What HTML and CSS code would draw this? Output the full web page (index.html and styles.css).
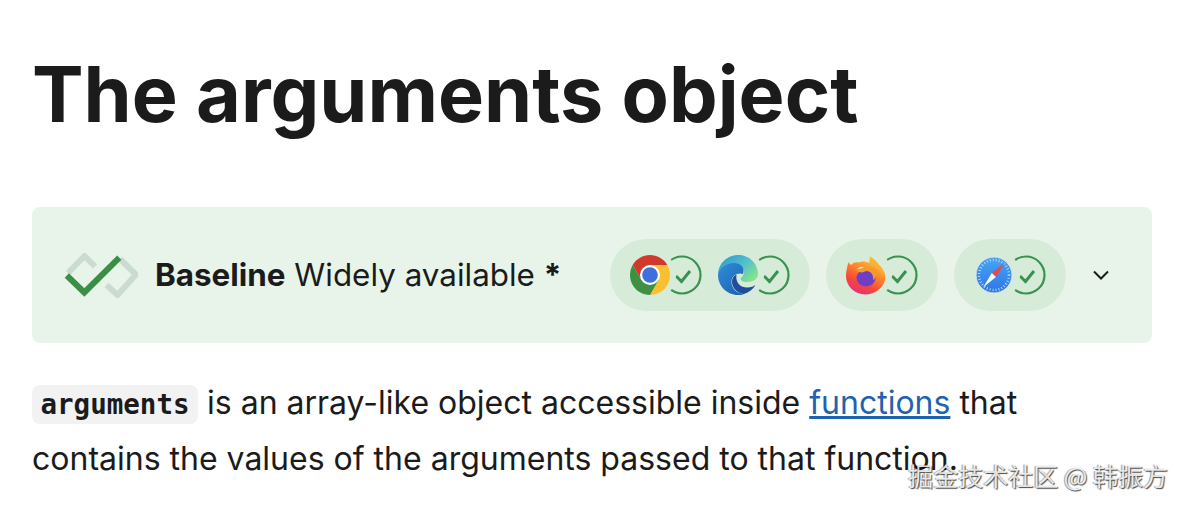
FILE: index.html
```html
<!DOCTYPE html>
<html lang="en">
<head>
<meta charset="utf-8">
<title>The arguments object</title>
<link rel="stylesheet" href="styles.css">
</head>
<body>
<main class="page">
  <h1 class="title">The arguments object</h1>
  <section class="baseline">
    <svg class="logo" viewBox="0 0 74 45" aria-hidden="true">
      <path class="logo-back" d="M4 20 20.500 3 31 13.500M42.500 32 53.500 42 72 21.500 56 6"/>
      <path class="logo-check" d="M2.800 22.500 20.300 39.500 55.300 4.700"/>
    </svg>
    <div class="label"><strong>Baseline</strong> Widely available <strong>*</strong></div>
    <div class="browsers">
      <div class="pill">
        <div class="browser">
          <svg class="ring" viewBox="0 0 40 40"><circle cx="20" cy="20" r="18.500"/><path d="M14 21 19.500 26.500 28 16"/></svg>
          <svg class="icon" viewBox="0 0 40 40">
            <circle class="cut" cx="20" cy="20" r="26"/>
            <path fill="#d0392b" d="M2.680 10A20 20 0 0 1 37.320 10H20L11.340 25Z"/>
            <path fill="#fbc02d" d="M37.320 10A20 20 0 0 1 20 40L28.660 25 20 10Z"/>
            <path fill="#3f9142" d="M20 40A20 20 0 0 1 2.680 10L11.340 25 28.660 25Z"/>
            <circle cx="20" cy="20" r="10" fill="#fff"/>
            <circle cx="20" cy="20" r="7.800" fill="#3f6fdc"/>
          </svg>
        </div>
        <div class="browser">
          <svg class="ring" viewBox="0 0 40 40"><circle cx="20" cy="20" r="18.500"/><path d="M14 21 19.500 26.500 28 16"/></svg>
          <svg class="icon" viewBox="0 0 40 40">
            <defs>
              <linearGradient id="edgeTop" x1="0" y1="0" x2="1" y2="0.700"><stop offset="0" stop-color="#2f95c6"/><stop offset="0.550" stop-color="#4dbcd4"/><stop offset="1" stop-color="#84e38a"/></linearGradient>
              <linearGradient id="edgeBody" x1="0" y1="0" x2="0.800" y2="1"><stop offset="0" stop-color="#2f8fd8"/><stop offset="1" stop-color="#1f62b4"/></linearGradient>
            </defs>
            <circle class="cut" cx="20" cy="20" r="26"/>
            <path fill="url(#edgeTop)" d="M20 0C31 0 40 8 40 19 40 24 35 27 29 27 24 27 22 25 23 23 25 21 26 19 26 17 26 13 22 9 17 9 9 9 2 14 0 20 0 9 9 0 20 0Z"/>
            <path fill="url(#edgeBody)" d="M0 20C1 13 9 7.500 17 8 24 8.500 27 14 25 19 20 17 14 20 13.500 26 13 33 19 39 26 39 24 40 22 40 20 40 9 40 0 31 0 20Z"/>
            <path fill="#1f4f9c" d="M18.500 19.500C15 21 14 24 14 27 14 33 20 39 26 39 31 37.500 35 34 37.500 30 36 31 33 32.500 29 32.500 23 32.500 17 28 18.500 19.500Z"/>
          </svg>
        </div>
      </div>
      <div class="pill">
        <div class="browser">
          <svg class="ring" viewBox="0 0 40 40"><circle cx="20" cy="20" r="18.500"/><path d="M14 21 19.500 26.500 28 16"/></svg>
          <svg class="icon" viewBox="0 0 40 40">
            <defs>
              <linearGradient id="foxBody" x1="0.800" y1="0" x2="0.300" y2="1"><stop offset="0" stop-color="#ffd646"/><stop offset="0.400" stop-color="#ff8f2a"/><stop offset="0.750" stop-color="#f4473a"/><stop offset="1" stop-color="#e62f80"/></linearGradient>
            </defs>
            <circle class="cut" cx="20" cy="20" r="26"/>
            <path fill="url(#foxBody)" d="M24 0C25 5 29 7 33 10 38 14 40 20 39 25 37 33 29 39.500 19.500 39.500 8.500 39.500 0 31 0 21 0 17 1 12 2.500 7 3.500 8.500 4 9.500 5.500 10 7 7.500 10 7 13 7.500 16 6 20 6.500 23 8 24 5 23.500 2 24 0Z"/>
            <path fill="#f9b233" d="M25 2C31 6 37 13 37 21 35 16 31 11 24 9 25 6 25 4 25 2Z"/>
            <ellipse cx="20" cy="23" rx="9.500" ry="8.500" fill="#6d3ec8"/>
            <path fill="#f39a2c" d="M10 15C14 10 25 10 30 15 31 19 30 23 27 25 28 20 25 16 20 16 17 18 13 18 10 15Z"/>
            <path fill="#fde7c4" d="M11.500 13.500C13 12 16 11.500 18 12 16 13.500 14 14 11.500 13.500Z"/>
          </svg>
        </div>
      </div>
      <div class="pill">
        <div class="browser">
          <svg class="ring" viewBox="0 0 40 40"><circle cx="20" cy="20" r="18.500"/><path d="M14 21 19.500 26.500 28 16"/></svg>
          <svg class="icon" viewBox="0 0 40 40">
            <defs>
              <linearGradient id="safariDial" x1="0" y1="0" x2="0" y2="1"><stop offset="0" stop-color="#45a6f4"/><stop offset="1" stop-color="#2f76e6"/></linearGradient>
            </defs>
            <circle class="cut" cx="20" cy="20" r="26"/>
            <circle cx="20" cy="20" r="18" fill="url(#safariDial)" stroke="#d9e6f2" stroke-width="1"/>
            <circle cx="20" cy="20" r="15" fill="none" stroke="#cfe4fa" stroke-width="2.500" stroke-dasharray="0.800 2.200"/>
            <path fill="#e5484d" d="M31 7.500 22 22 17.800 18Z"/>
            <path fill="#f4f6f8" d="M9 32.500 17.800 18 22 22Z"/>
          </svg>
        </div>
      </div>
    </div>
    <svg class="chevron" viewBox="0 0 18 12" aria-hidden="true"><path d="M2 2.500 9 9.500 16 2.500"/></svg>
  </section>
  <p class="intro"><code class="code">arguments</code> is an array-like object accessible inside <a class="link" href="#">functions</a> that contains the values of the arguments passed to that function.</p>
</main>
<div class="watermark">掘金技术社区 @ 韩振方</div>
</body>
</html>
```

FILE: styles.css
```css
* {
  box-sizing: border-box;
}

html,
body {
  margin: 0;
  height: 100%;
  overflow: hidden;
  background: #fff;
}

body {
  position: relative;
  font-family: Inter, "Liberation Sans", sans-serif;
  color: #1b1b1b;
}

.page {
  padding: 0 32px;
}

.title {
  margin: 0;
  padding-top: 46px;
  height: 207px;
  font-size: 77.300px;
  line-height: 96px;
  font-weight: 700;
}

.baseline {
  display: flex;
  align-items: center;
  height: 136px;
  padding: 32px;
  background: #e8f4ea;
  border-radius: 8px;
}

.logo {
  flex: none;
  width: 74px;
  height: 45px;
  fill: none;
}

.logo-back {
  stroke: #c9dccf;
  stroke-width: 6;
  fill: none;
}

.logo-check {
  stroke: #3a8e45;
  stroke-width: 6;
  fill: none;
}

.label {
  margin-left: 17px;
  font-size: 31.400px;
  line-height: 40px;
  white-space: nowrap;
}

.browsers {
  display: flex;
  gap: 16px;
  margin-left: auto;
}

.pill {
  display: flex;
  gap: 16px;
  height: 72px;
  padding: 16px 20px;
  background: #d7ebd9;
  border-radius: 36px;
  overflow: hidden;
}

.browser {
  position: relative;
  width: 72px;
  height: 40px;
}

.icon {
  position: absolute;
  left: 0;
  top: 0;
  width: 40px;
  height: 40px;
  overflow: visible;
}

.cut {
  fill: #d7ebd9;
}

.ring {
  position: absolute;
  right: 0;
  top: 0;
  width: 40px;
  height: 40px;
  fill: none;
  stroke: #3a9150;
  stroke-width: 2.200;
}

.ring path {
  stroke-width: 3;
}

.chevron {
  flex: none;
  width: 18px;
  height: 12px;
  margin: 0 10px 0 26px;
  fill: none;
  stroke: #1b1b1b;
  stroke-width: 2;
}

.intro {
  margin: 32px 0 0;
  font-size: 32px;
  line-height: 56px;
}

.code {
  display: inline-block;
  padding: 0 8.500px;
  height: 39px;
  line-height: 39px;
  background: #f2f2f2;
  border-radius: 8px;
  font-family: "DejaVu Sans Mono", "Liberation Mono", monospace;
  font-weight: 700;
  font-size: 27.500px;
  vertical-align: baseline;
}

.link {
  color: #1f63b0;
}

.watermark {
  position: absolute;
  right: 16px;
  bottom: 15px;
  font-family: "Noto Sans CJK SC", sans-serif;
  font-size: 25px;
  line-height: 32px;
  color: rgba(255, 255, 255, 0.85);
  text-shadow: 1px 1px 1px rgba(0, 0, 0, 0.7), -1px 0 1px rgba(0, 0, 0, 0.4);
  white-space: nowrap;
}
```
